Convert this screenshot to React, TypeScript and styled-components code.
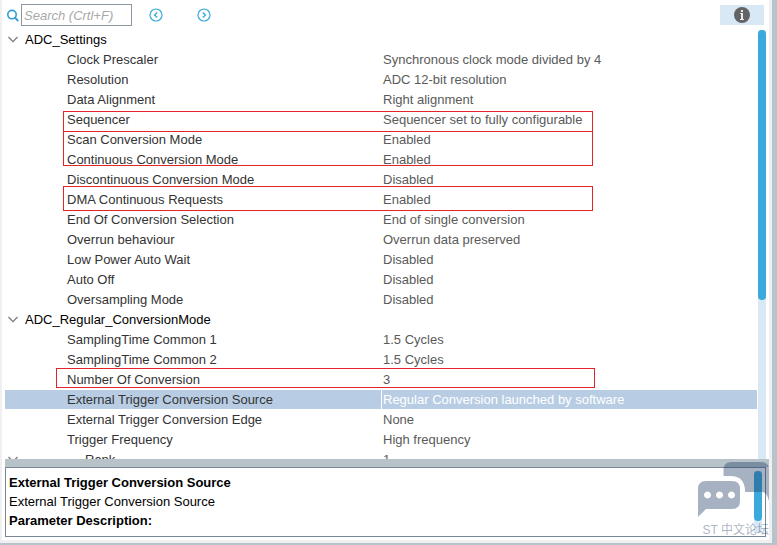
import React from "react";
import styled, { createGlobalStyle } from "styled-components";

const GlobalStyle = createGlobalStyle`
  *, *::before, *::after { box-sizing: border-box; }
  html, body { margin: 0; padding: 0; }
  body {
    font-family: "Liberation Sans", Arial, sans-serif;
    font-size: 13px;
    color: #333;
    background: #b7c3c8;
  }
`;

const Window = styled.div`
  position: relative;
  height: 100vh;
  padding: 0 5px 2px 0;
  background: #b7c3c8;
`;

const Frame = styled.main`
  display: flex;
  flex-direction: column;
  height: 100%;
  padding: 0 3px 3px;
  background: #fff;
  border: solid #f0f0f3;
  border-width: 0 3px 3px 2px;
`;

const Toolbar = styled.form`
  display: flex;
  align-items: center;
  flex: none;
  height: 30px;
  padding: 0 2px 0 1px;
`;

const SearchLabel = styled.label`
  display: flex;
  align-items: center;
  gap: 2px;
`;

const SearchInput = styled.input`
  width: 111px;
  height: 22px;
  padding: 0 2px;
  border: 1px solid #8a97a2;
  border-radius: 0;
  background: #fff;
  font: italic 13px "Liberation Sans", Arial, sans-serif;
  color: #333;
  outline: none;
  &::placeholder { color: #a9a9a9; opacity: 1; }
`;

const Steps = styled.div`
  display: flex;
  gap: 34px;
  margin-left: 17px;
`;

const IconButton = styled.button`
  display: flex;
  padding: 0;
  border: 0;
  background: none;
`;

const InfoButton = styled.button`
  display: flex;
  align-items: center;
  justify-content: center;
  width: 44px;
  height: 20px;
  margin-left: auto;
  padding: 0;
  border: 0;
  background: #d9e8f5;
`;

const TreePane = styled.section`
  position: relative;
  display: flex;
  flex: 1;
  min-height: 0;
  overflow: hidden;
`;

const TreeTable = styled.table`
  flex: 1;
  width: 100%;
  height: max-content;
  table-layout: fixed;
  border-collapse: separate;
  border-spacing: 0;
`;

const NameColumn = styled.col`
  width: 376px;
`;

const Row = styled.tr<{ $selected?: boolean }>`
  height: 20px;
  color: ${(p) => (p.$selected ? "#fff" : "#5a5a5a")};
  background: ${(p) => (p.$selected ? "#b8cde4" : "transparent")};
`;

const NameCell = styled.th<{ $indent: number }>`
  padding: 0 0 0 ${(p) => p.$indent}px;
  border-bottom: 1px solid #fff;
  font-weight: normal;
  text-align: left;
  line-height: 19px;
  color: #333;
  white-space: nowrap;
`;

const ValueCell = styled.td<{ $divided?: boolean }>`
  padding: 0 0 0 ${(p) => (p.$divided ? 1 : 2)}px;
  border-bottom: 1px solid #fff;
  border-left: ${(p) => (p.$divided ? "1px solid #fff" : "0")};
  line-height: 19px;
  white-space: nowrap;
`;

const Toggle = styled.button<{ $gap: number; $dark?: boolean }>`
  display: flex;
  align-items: center;
  gap: ${(p) => p.$gap}px;
  height: 19px;
  padding: 0;
  border: 0;
  background: none;
  font: inherit;
  color: ${(p) => (p.$dark ? "#000" : "#333")};
`;

const ScrollTrack = styled.div`
  flex: none;
  width: 8px;
  margin-left: 1px;
  background: #d9e8f5;
`;

const ScrollThumb = styled.div<{ $share: number }>`
  height: ${(p) => p.$share}%;
  border-radius: 4px;
  background: #3aa9dc;
`;

const Mark = styled.div<{ $x: number; $y: number; $w: number; $h: number }>`
  position: absolute;
  left: ${(p) => p.$x}px;
  top: ${(p) => p.$y}px;
  width: ${(p) => p.$w}px;
  height: ${(p) => p.$h}px;
  border: 1px solid #e3242b;
  pointer-events: none;
`;

const Splitter = styled.div`
  flex: none;
  height: 8px;
  margin-right: -3px;
  background: #b7c3c8;
`;

const Details = styled.section`
  display: flex;
  flex: none;
  justify-content: space-between;
  padding: 3px;
  border: 1px solid #76879a;
`;

const DetailsText = styled.div`
  padding-top: 2px;
  line-height: 19px;
  color: #000;
`;

const DetailsTitle = styled.h2`
  margin: 0;
  font-size: 13px;
  line-height: 19px;
`;

const DetailsLine = styled.p`
  margin: 0;
`;

const DetailsTrack = styled(ScrollTrack)`
  height: 62px;
`;

const Watermark = styled.div`
  position: absolute;
  right: 8px;
  bottom: 5px;
  display: flex;
  flex-direction: column;
  align-items: flex-end;
  color: rgba(32, 60, 100, 0.4);
  font: 12px/20px "Liberation Sans", "Noto Sans CJK SC", sans-serif;
  white-space: nowrap;
  pointer-events: none;
`;

const Bubbles = styled.svg`
  margin-bottom: 3px;
`;

type Item = { name: string; value?: string; selected?: boolean; kind?: "group" | "rank" };

const items: Item[] = [
  { name: "ADC_Settings", kind: "group" },
  { name: "Clock Prescaler", value: "Synchronous clock mode divided by 4" },
  { name: "Resolution", value: "ADC 12-bit resolution" },
  { name: "Data Alignment", value: "Right alignment" },
  { name: "Sequencer", value: "Sequencer set to fully configurable" },
  { name: "Scan Conversion Mode", value: "Enabled" },
  { name: "Continuous Conversion Mode", value: "Enabled" },
  { name: "Discontinuous Conversion Mode", value: "Disabled" },
  { name: "DMA Continuous Requests", value: "Enabled" },
  { name: "End Of Conversion Selection", value: "End of single conversion" },
  { name: "Overrun behaviour", value: "Overrun data preserved" },
  { name: "Low Power Auto Wait", value: "Disabled" },
  { name: "Auto Off", value: "Disabled" },
  { name: "Oversampling Mode", value: "Disabled" },
  { name: "ADC_Regular_ConversionMode", kind: "group" },
  { name: "SamplingTime Common 1", value: "1.5 Cycles" },
  { name: "SamplingTime Common 2", value: "1.5 Cycles" },
  { name: "Number Of Conversion", value: "3" },
  { name: "External Trigger Conversion Source", value: "Regular Conversion launched by software", selected: true },
  { name: "External Trigger Conversion Edge", value: "None" },
  { name: "Trigger Frequency", value: "High frequency" },
  { name: "Rank", value: "1", kind: "rank" },
];

const Chevron = () => (
  <svg width="10" height="7" viewBox="0 0 10 7" fill="none" stroke="#777" strokeWidth="1.2">
    <path d="M0.5 1 5 5.6 9.5 1" />
  </svg>
);

const StepIcon = ({ d }: { d: string }) => (
  <svg width="14" height="14" viewBox="0 0 14 14" fill="none" stroke="#3aa9dc" strokeWidth="1.2">
    <circle cx="7" cy="7" r="6" />
    <path d={d} strokeWidth="1.4" />
  </svg>
);

const TreeRow = ({ item }: { item: Item }) => (
  <Row $selected={item.selected}>
    <NameCell scope="row" $indent={item.kind ? 3 : 62}>
      {item.kind ? (
        <Toggle type="button" aria-expanded="true" $gap={item.kind === "group" ? 7 : 67} $dark={item.kind === "group"}>
          <Chevron />
          {item.name}
        </Toggle>
      ) : (
        item.name
      )}
    </NameCell>
    <ValueCell $divided={item.selected}>{item.value}</ValueCell>
  </Row>
);

export default function App() {
  return (
    <>
      <GlobalStyle />
      <Window>
        <Frame>
          <Toolbar onSubmit={(e) => e.preventDefault()}>
            <SearchLabel>
              <svg width="13" height="13" viewBox="0 0 13 13" fill="none" stroke="#2f9fd6" strokeWidth="1.6">
                <circle cx="6" cy="5.6" r="4.2" />
                <path d="M9 8.6 12.2 12" strokeWidth="1.9" />
              </svg>
              <SearchInput type="text" aria-label="Search" placeholder="Search (Crtl+F)" />
            </SearchLabel>
            <Steps>
              <IconButton type="button" aria-label="Previous match">
                <StepIcon d="M8.2 4.4 5.6 7 8.2 9.6" />
              </IconButton>
              <IconButton type="button" aria-label="Next match">
                <StepIcon d="M5.8 4.4 8.4 7 5.8 9.6" />
              </IconButton>
            </Steps>
            <InfoButton type="button" aria-label="Information">
              <svg width="16" height="16" viewBox="0 0 16 16">
                <circle cx="8" cy="8" r="8" fill="#636363" />
                <path d="M7 3h2v2H7zM6 6h3v6h1v1H6v-1h1V7H6z" fill="#e4edf5" />
              </svg>
            </InfoButton>
          </Toolbar>
          <TreePane>
            <TreeTable>
              <colgroup>
                <NameColumn />
                <col />
              </colgroup>
              <tbody>
                {items.map((item) => (
                  <TreeRow key={item.name} item={item} />
                ))}
              </tbody>
            </TreeTable>
            <ScrollTrack>
              <ScrollThumb $share={63} />
            </ScrollTrack>
            <Mark $x={58} $y={81} $w={530} $h={21} />
            <Mark $x={58} $y={101} $w={530} $h={35} />
            <Mark $x={58} $y={156} $w={530} $h={25} />
            <Mark $x={51} $y={338} $w={539} $h={20} />
          </TreePane>
          <Splitter />
          <Details>
            <DetailsText>
              <DetailsTitle>External Trigger Conversion Source</DetailsTitle>
              <DetailsLine>External Trigger Conversion Source</DetailsLine>
              <DetailsTitle>Parameter Description:</DetailsTitle>
            </DetailsText>
            <DetailsTrack>
              <ScrollThumb $share={81} />
            </DetailsTrack>
          </Details>
        </Frame>
        <Watermark>
          <Bubbles width="71" height="55" viewBox="0 0 71 55" fill="currentColor">
            <path d="M25.500 14V8Q25.500 0 33.500 0H63Q71 0 71 8V39Q69 31 65 30H47V28Q46 14 33 14Z" />
            <path
              fillRule="evenodd"
              d="M8 19H34Q42 19 42 27V39Q42 47 34 47H8Q5 50 0 55V27Q0 19 8 19ZM9.500 29.500a3.500 3.500 0 1 0 .01 0ZM21.500 29.500a3.500 3.500 0 1 0 .01 0ZM33.500 29.500a3.500 3.500 0 1 0 .01 0Z"
            />
          </Bubbles>
          ST 中文论坛
        </Watermark>
      </Window>
    </>
  );
}
